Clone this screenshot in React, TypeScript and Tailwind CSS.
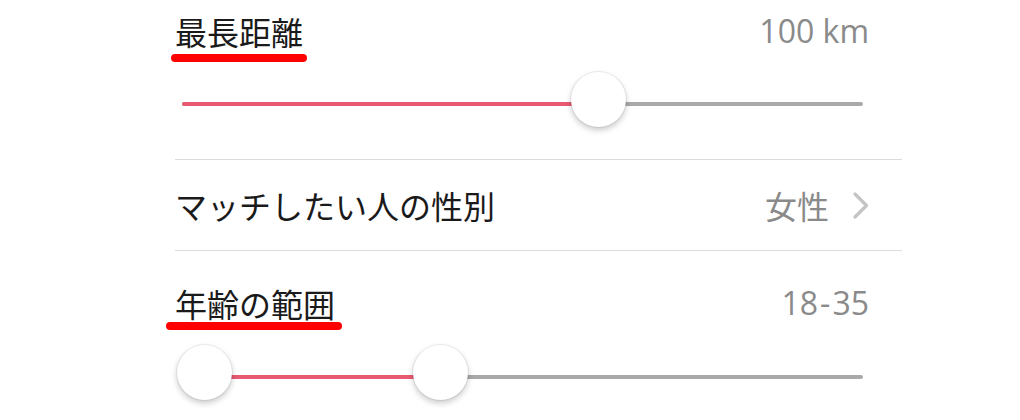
import React from "react";

const jp = { fontFamily: '"Noto Sans CJK JP", "Noto Sans", sans-serif' };
const num = { fontFamily: '"Open Sans", "Noto Sans CJK JP", sans-serif' };

function Thumb({ left }: { left: number }) {
  return (
    <div
      className="absolute top-[-30px] h-[55px] w-[55px] rounded-full bg-white shadow-[0_3px_6px_rgba(0,0,0,0.22),0_0_0_1px_rgba(0,0,0,0.06)]"
      style={{ left: left - 27.5 }}
    />
  );
}

function Track({
  from,
  to,
  thumbs,
}: {
  from: number;
  to: number;
  thumbs: number[];
}) {
  return (
    <div className="relative ml-[7px] h-[4px] w-[681px] rounded-full bg-[#a9a9a9]">
      <div
        className="absolute top-0 h-[4px] rounded-full bg-[#e85a70]"
        style={{ left: from, width: to - from }}
      />
      {thumbs.map((t, i) => (
        <Thumb key={i} left={t} />
      ))}
    </div>
  );
}

export default function App() {
  return (
    <div className="h-[420px] w-[1020px] overflow-hidden bg-white" style={jp}>
      <div className="ml-[175px] w-[727px]">
        {/* Row 1 */}
        <div className="pt-[11px]">
          <div className="flex items-start justify-between pr-[33px] text-[32px] leading-[40px]">
            <span className="relative text-[#1a1a1a]">
              最長距離
              <span className="absolute left-[-4px] top-[43px] h-[8px] w-[136px] rounded-full bg-[#ff0000]" />
            </span>
            <span className="text-[#8a8a8a]" style={num}>
              100 km
            </span>
          </div>
          <div className="pt-[51px] pb-[53px]">
            <Track from={0} to={395} thumbs={[416]} />
          </div>
        </div>
        <div className="h-px bg-[#dcdcdc]" />
        {/* Row 2 */}
        <div className="flex h-[90px] items-center justify-between pr-[33px] text-[32px] leading-[40px]">
          <span className="text-[#1a1a1a]">マッチしたい人の性別</span>
          <span className="flex items-center gap-[24px] text-[#8a8a8a]">
            <span>女性</span>
            <svg width="16" height="27" viewBox="0 0 16 27" fill="none">
              <path
                d="M2 2 L13.5 13.5 L2 25"
                stroke="#c4c4c4"
                strokeWidth="3.2"
                strokeLinecap="round"
                strokeLinejoin="round"
              />
            </svg>
          </span>
        </div>
        <div className="h-px bg-[#dcdcdc]" />
        {/* Row 3 */}
        <div className="pt-[32px]">
          <div className="flex items-start justify-between pr-[33px] text-[32px] leading-[40px]">
            <span className="relative text-[#1a1a1a]">
              年齢の範囲
              <span className="absolute left-[-9px] top-[39px] h-[8px] w-[176px] rounded-full bg-[#ff0000]" />
            </span>
            <span className="text-[#8a8a8a]" style={num}>
              18<span className="mx-[2px]">-</span>35
            </span>
          </div>
          <div className="pt-[52px]">
            <Track from={22} to={258} thumbs={[22, 258]} />
          </div>
        </div>
      </div>
    </div>
  );
}
